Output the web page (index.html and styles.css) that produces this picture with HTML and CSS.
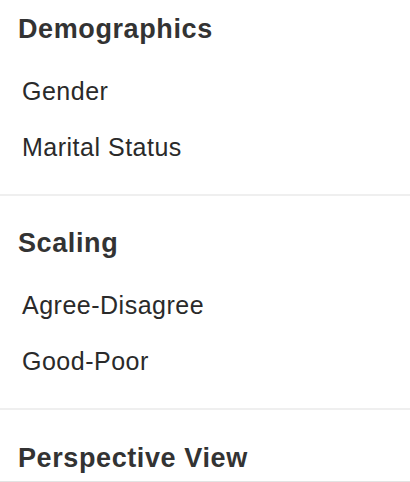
FILE: index.html
```html
<!DOCTYPE html>
<html lang="en">
<head>
    <meta charset="UTF-8">
    <meta name="viewport" content="width=device-width, initial-scale=1.0">
    <title>Categories</title>
    <link rel="stylesheet" href="styles.css">
</head>
<body>

    <div class="sidebar">
        <!-- Demographics -->
        <div class="section">
            <h3 class="section-title">Demographics</h3>
            <ul class="section-list">
                <li>Gender</li>
                <li>Marital Status</li>
            </ul>
        </div>

        <!-- Scaling -->
        <div class="section">
            <h3 class="section-title">Scaling</h3>
            <ul class="section-list">
                <li>Agree-Disagree</li>
                <li>Good-Poor</li>
            </ul>
        </div>

        <!-- Perspective View -->
        <div class="section section-last">
            <h3 class="section-title">Perspective View</h3>
        </div>
    </div>

</body>
</html>
```
FILE: styles.css
```css
body {
    margin: 0;
    font-family: "Liberation Sans", Arial, sans-serif;
    background-color: #ffffff;
    color: #333;
}

.sidebar {
    width: 410px;
}

.section {
    padding: 32px 0 19px 0;
    border-bottom: 2px solid #efefef;
}

.section:first-child {
    padding-top: 14px;
    padding-bottom: 19px;
}

.section-title {
    margin: 0;
    padding-left: 18px;
    font-size: 27px;
    line-height: 30px;
    font-weight: bold;
    letter-spacing: 0.6px;
    color: #333;
}

.section-list {
    list-style: none;
    margin: 19px 0 0 0;
    padding: 0;
}

.section-list li {
    padding-left: 22px;
    font-size: 25px;
    line-height: 56px;
    letter-spacing: 0.5px;
    color: #2a2a2a;
}

.section-last {
    padding-top: 33px;
    padding-bottom: 8px;
    border-bottom: 2px solid #e3e3e3;
}
```
